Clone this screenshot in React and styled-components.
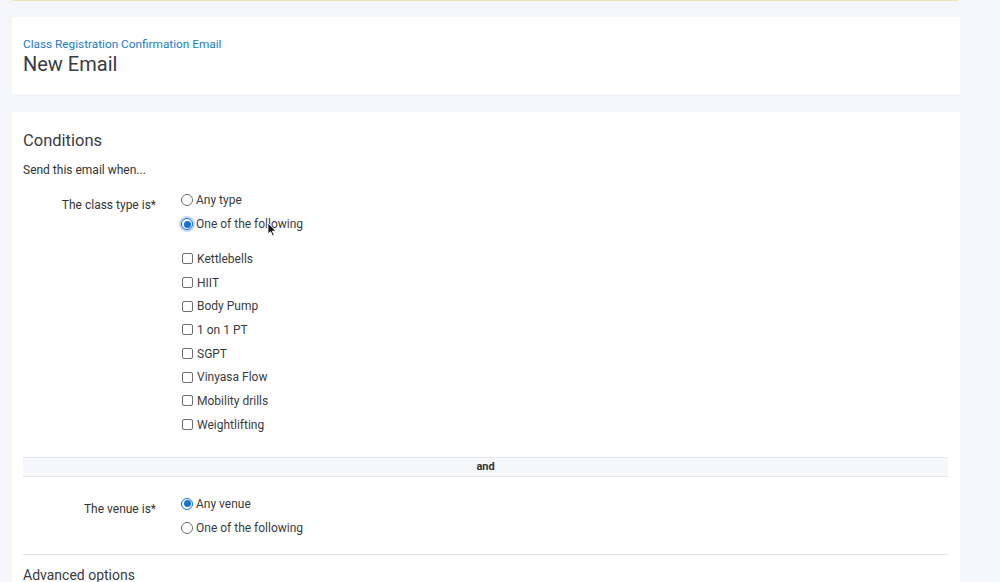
import React from "react";
import styled, { createGlobalStyle } from "styled-components";

const Global = createGlobalStyle`
  html, body { margin: 0; padding: 0; }
  body {
    background: #f5f6fb;
    font-family: Roboto, "Liberation Sans", Arial, sans-serif;
    color: #333;
    -webkit-font-smoothing: antialiased;
  }
`;

const Page = styled.div`
  width: 948px;
  padding-left: 12px;
  height: 582px;
  overflow: hidden;
`;

const TopLine = styled.div`
  height: 1px;
  background: #f1e2bb;
  margin-right: 2px;
`;

const Card = styled.section`
  background: #ffffff;
  padding: ${(p) => p.$pad || "0 12px 0 11px"};
  margin-top: ${(p) => p.$mt || "0"};
`;

const Breadcrumb = styled.div`
  font-size: 11.8px;
  line-height: 16px;
  color: #1b7cc7;
`;

const Title = styled.h1`
  margin: 0;
  font-size: 20px;
  font-weight: 400;
  line-height: 24px;
  color: #3a3b40;
`;

const SectionTitle = styled.h2`
  margin: 0;
  font-size: 16.5px;
  font-weight: 400;
  line-height: 24px;
  color: #3a3b40;
`;

const Intro = styled.p`
  margin: 9px 0 0;
  font-size: 12px;
  line-height: 16px;
  color: #333;
`;

const FormRow = styled.div`
  display: grid;
  grid-template-columns: 133px 1fr;
  column-gap: 25px;
  margin-top: ${(p) => p.$mt || "0"};
`;

const Label = styled.div`
  text-align: right;
  font-size: 12px;
  line-height: 16px;
  padding-top: 9px;
  color: #333;
`;

const Options = styled.div`
  display: flex;
  flex-direction: column;
`;

const Option = styled.label`
  position: relative;
  display: flex;
  align-items: center;
  gap: 3px;
  height: ${(p) => p.$h || "24px"};
  font-size: 12px;
  color: #3a3b40;
  margin-top: ${(p) => p.$mt || "0"};
`;

const Radio = styled.span`
  box-sizing: border-box;
  width: 12px;
  height: 12px;
  border-radius: 50%;
  border: 1px solid ${(p) => (p.$on ? "#1a6fe0" : "#6e6e73")};
  display: flex;
  align-items: center;
  justify-content: center;
  background: #fff;
  box-shadow: ${(p) => (p.$focus ? "0 0 0 2px #c3d9f7" : "none")};
  &::after {
    content: "";
    display: ${(p) => (p.$on ? "block" : "none")};
    width: 7px;
    height: 7px;
    border-radius: 50%;
    background: #1a6fe0;
  }
`;

const Box = styled.span`
  box-sizing: border-box;
  width: 11px;
  height: 11px;
  border-radius: 2px;
  border: 1px solid #6e6e73;
  background: #fff;
  margin-left: 1px;
  margin-right: 1px;
`;

const AndBand = styled.div`
  margin-top: 20px;
  height: 18px;
  border-top: 1px solid #e6e7ee;
  border-bottom: 1px solid #e6e7ee;
  background: #f6f7fb;
  display: flex;
  align-items: center;
  justify-content: center;
  font-size: 11px;
  font-weight: 700;
  color: #333;
`;

const Rule = styled.hr`
  border: none;
  border-top: 1px solid #e3e4ea;
  margin: 14px 0 0;
`;

const Subhead = styled.h3`
  margin: 11px 0 0;
  font-size: 14px;
  font-weight: 400;
  line-height: 18px;
  color: #3a3b40;
`;

const Cursor = styled.svg`
  position: absolute;
  left: 86px;
  top: 10px;
  width: 10px;
  height: 15px;
  pointer-events: none;
`;

const classTypes = [
  "Kettlebells",
  "HIIT",
  "Body Pump",
  "1 on 1 PT",
  "SGPT",
  "Vinyasa Flow",
  "Mobility drills",
  "Weightlifting",
];

export default function App() {
  return (
    <>
      <Global />
      <Page>
        <TopLine />
        <Card $mt="16px" $pad="19px 12px 18px 11px">
          <Breadcrumb>Class Registration Confirmation Email</Breadcrumb>
          <Title>New Email</Title>
        </Card>
        <Card $mt="18px" $pad="17px 12px 40px 11px">
          <SectionTitle>Conditions</SectionTitle>
          <Intro>Send this email when...</Intro>
          <FormRow $mt="10px">
            <Label>The class type is*</Label>
            <Options>
              <Option>
                <Radio />
                Any type
              </Option>
              <Option>
                <Radio $on $focus />
                One of the following
                <Cursor viewBox="0 0 10 15">
                  <path
                    d="M1 1 L1 12 L3.6 9.6 L5.6 14 L7.2 13.3 L5.3 9 L8.8 9 Z"
                    fill="#111"
                    stroke="#fff"
                    strokeWidth="0.8"
                  />
                </Cursor>
              </Option>
              {classTypes.map((t, i) => (
                <Option key={t} $h="23.7px" $mt={i === 0 ? "11px" : "0"}>
                  <Box />
                  {t}
                </Option>
              ))}
            </Options>
          </FormRow>
          <AndBand>and</AndBand>
          <FormRow $mt="15px">
            <Label>The venue is*</Label>
            <Options>
              <Option>
                <Radio $on />
                Any venue
              </Option>
              <Option>
                <Radio />
                One of the following
              </Option>
            </Options>
          </FormRow>
          <Rule />
          <Subhead>Advanced options</Subhead>
        </Card>
      </Page>
    </>
  );
}
